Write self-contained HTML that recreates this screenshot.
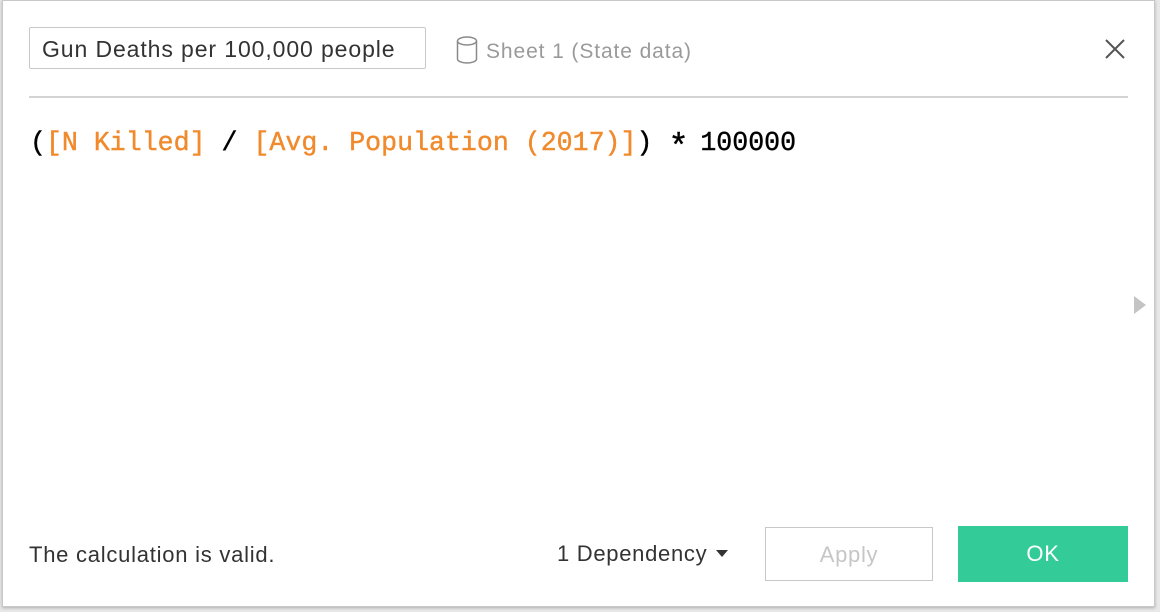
<!DOCTYPE html>
<html><head><style>
html,body{margin:0;padding:0;width:1160px;height:612px;overflow:hidden;background:#e8e8e8;font-family:"Liberation Sans",sans-serif;}
.dlg{position:absolute;left:2px;top:0;width:1151px;height:605px;background:#fff;border:1px solid #c8c8c8;box-shadow:0 1px 3px rgba(0,0,0,.25);}
.name{position:absolute;left:29px;top:27px;width:397px;height:42px;border:1px solid #c9c9c9;border-radius:2px;box-sizing:border-box;font-size:23px;letter-spacing:0.9px;color:#333;padding:8px 0 0 12px;white-space:nowrap;}
.src{position:absolute;left:456px;top:36px;font-size:21px;letter-spacing:0.9px;color:#9a9a9a;white-space:nowrap;}
.src svg{vertical-align:-6px;margin-right:8px}
.close{position:absolute;left:1104px;top:38px;}
.hr{position:absolute;left:29px;top:96px;width:1099px;height:2px;background:#d4d4d4;}
.f{position:absolute;left:30px;top:128px;font-family:"Liberation Mono",monospace;font-size:26.6px;color:#000;white-space:pre;-webkit-text-stroke:0.4px currentColor;}
.o{color:#f08a2c}
.ast{display:inline-block;width:16px;text-align:center;font-size:34px;line-height:0;vertical-align:-7px}
.tri{position:absolute;left:1134px;top:296px;width:0;height:0;border-top:9px solid transparent;border-bottom:9px solid transparent;border-left:12px solid #c4c4c4;}
.valid{position:absolute;left:29px;top:542px;font-size:22px;letter-spacing:0.75px;color:#333;white-space:nowrap;}
.dep{position:absolute;left:557px;top:541px;font-size:22px;letter-spacing:0.7px;color:#333;white-space:nowrap;}
.dep span{display:inline-block;width:0;height:0;border-left:6px solid transparent;border-right:6px solid transparent;border-top:7px solid #333;vertical-align:4px;margin-left:9px}
.apply{position:absolute;left:765px;top:527px;width:168px;height:54px;border:1px solid #c8c8c8;box-sizing:border-box;color:#c6c6c6;font-size:22px;letter-spacing:0.7px;text-align:center;line-height:54px;}
.ok{position:absolute;left:958px;top:526px;width:170px;height:56px;background:#33cc99;color:#fff;font-size:22px;letter-spacing:0.7px;text-align:center;line-height:56px;}
</style></head><body>
<div class="dlg"></div>
<div class="name">Gun Deaths per 100,000 people</div>
<div class="src"><svg width="22" height="28" viewBox="0 0 22 28"><ellipse cx="11" cy="5" rx="9.5" ry="4" fill="none" stroke="#8a8a8a" stroke-width="1.5"/><path d="M1.5 5V23c0 2.2 4.3 4 9.5 4s9.5-1.8 9.5-4V5" fill="none" stroke="#8a8a8a" stroke-width="1.5"/></svg>Sheet 1 (State data)</div>
<svg class="close" width="22" height="22" viewBox="0 0 22 22"><path d="M2 2L20 20M20 2L2 20" stroke="#555" stroke-width="2"/></svg>
<div class="hr"></div>
<div class="f">(<span class="o">[N Killed]</span> / <span class="o">[Avg. Population (2017)]</span>) <span class="ast">*</span> 100000</div>
<div class="tri"></div>
<div class="valid">The calculation is valid.</div>
<div class="dep">1 Dependency<span></span></div>
<div class="apply">Apply</div>
<div class="ok">OK</div>
</body></html>
